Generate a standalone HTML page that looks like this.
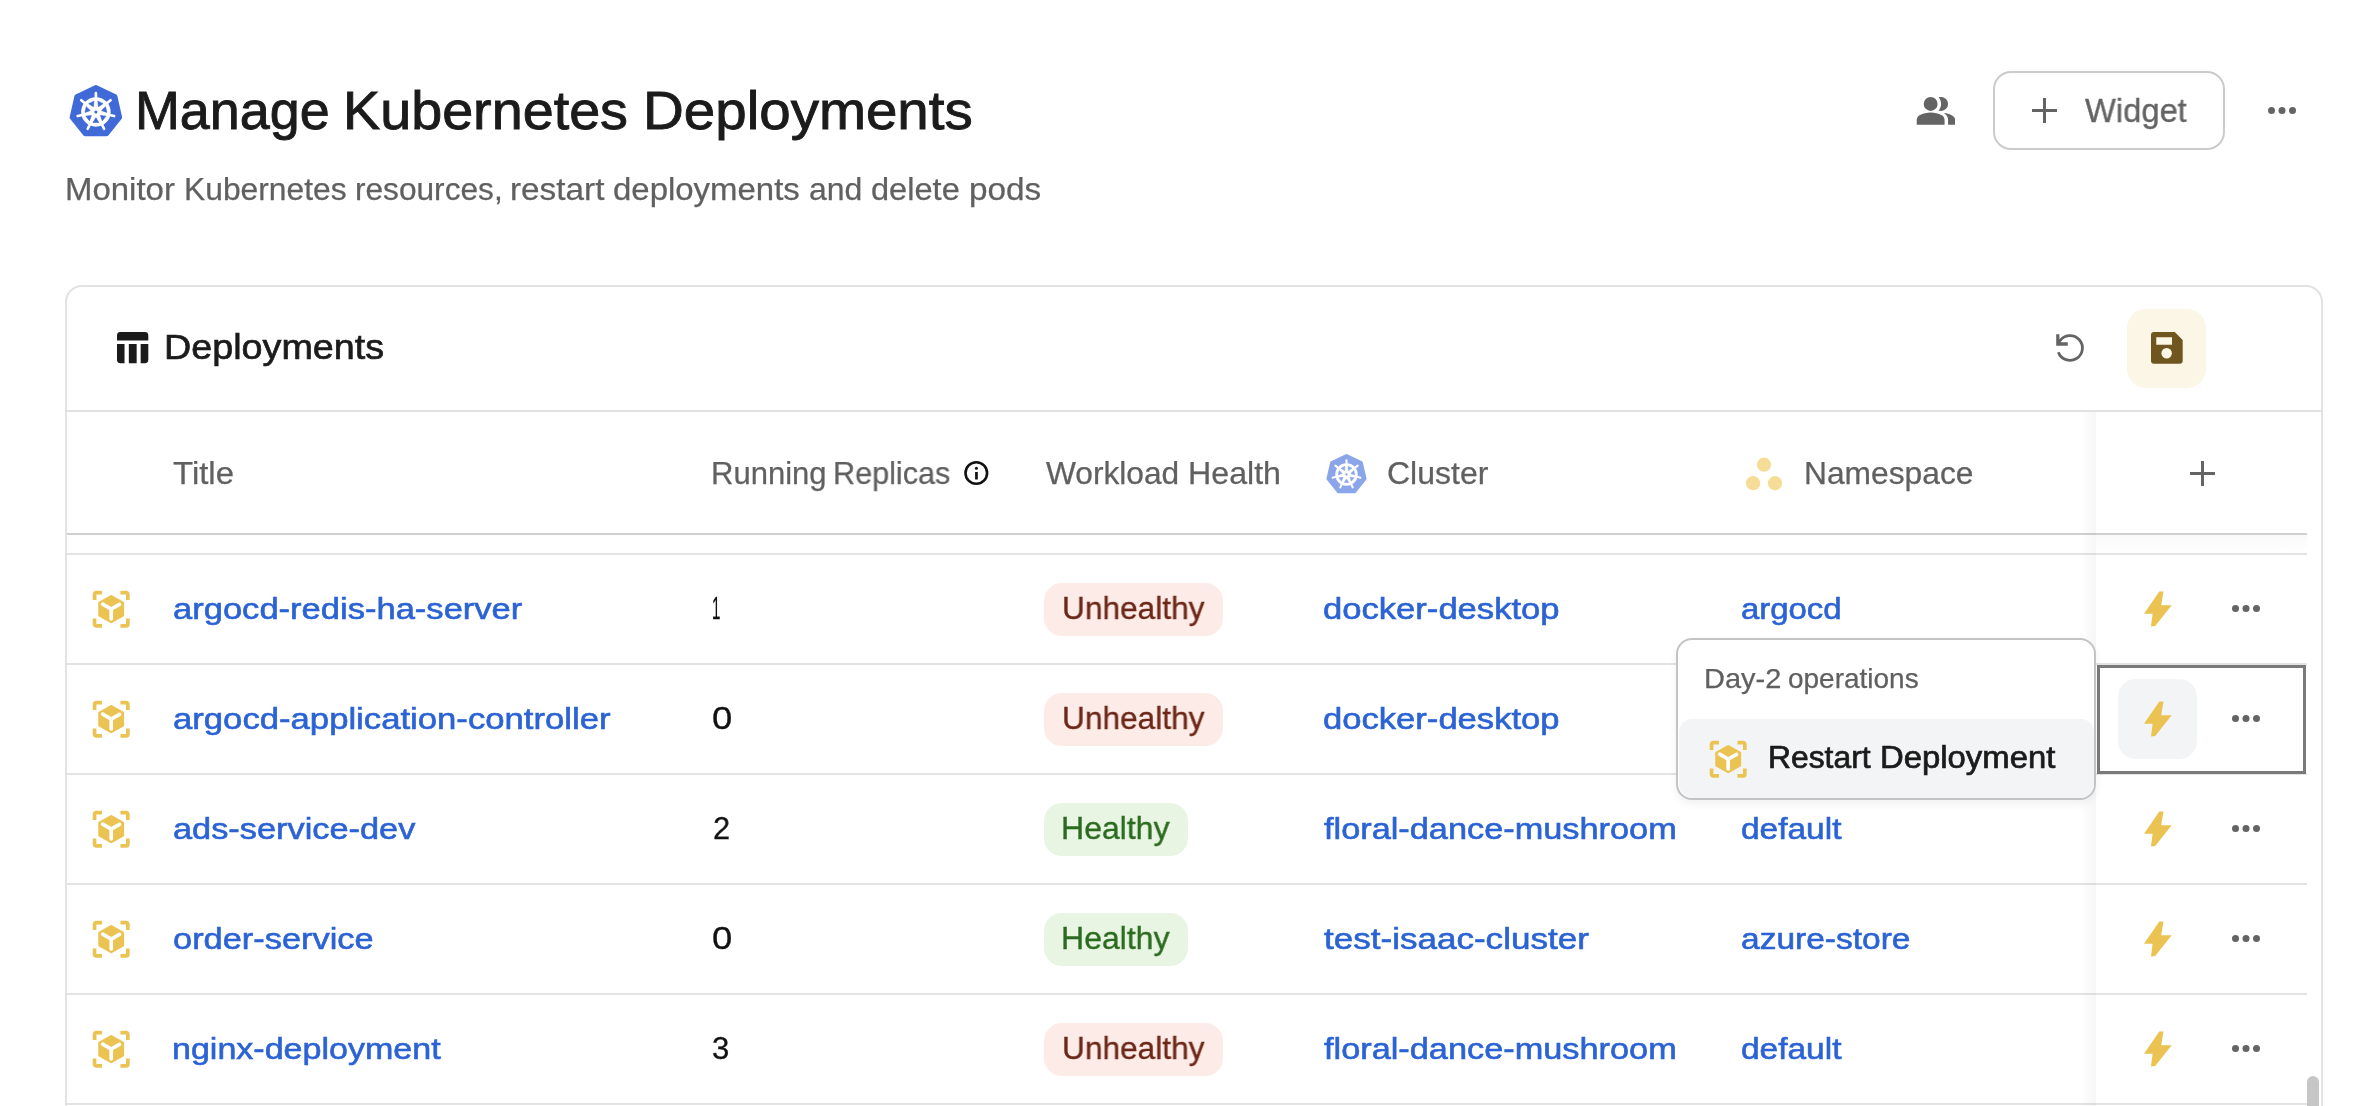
<!DOCTYPE html>
<html><head><meta charset="utf-8">
<style>
html,body{margin:0;padding:0}
html{width:2354px;height:1106px;overflow:hidden;background:#fff}
body{width:2354px;height:1106px;overflow:hidden;background:#fff;font-family:"Liberation Sans",sans-serif;position:relative}
.a{position:absolute}
.t{position:absolute;white-space:nowrap;line-height:1;transform-origin:0 0;will-change:transform}
.badge{position:absolute;height:53px;border-radius:18px}
.hl{position:absolute;left:67px;width:2240px;height:2px;background:#e3e3e3}
</style></head>
<body><div style="position:absolute;left:0;top:0;width:2354px;height:1106px;overflow:hidden">
<svg class="a" style="left:68.70px;top:84.90px" width="53.80" height="53.80" viewBox="0 0 100 100">
  <polygon points="50.00,4.00 85.96,21.32 94.85,60.24 69.96,91.44 30.04,91.44 5.15,60.24 14.04,21.32" fill="#3f6ad8" stroke="#3f6ad8" stroke-width="8" stroke-linejoin="round"/>
  <circle cx="50" cy="50" r="27.4" fill="#fff"/>
  <path d="M50.00 24.00L50.00 15.20M70.33 33.79L77.21 28.30M75.35 55.79L83.93 57.74M61.28 73.43L65.10 81.35M38.72 73.43L34.90 81.35M24.65 55.79L16.07 57.74M29.67 33.79L22.79 28.30" stroke="#fff" stroke-width="5" stroke-linecap="round"/>
  <path fill="#3f6ad8" stroke="#3f6ad8" stroke-width="1.2" stroke-linejoin="round" d="M53.60 30.02L63.38 34.73L54.69 40.27ZM67.86 40.36L70.28 50.94L60.53 47.60ZM68.68 57.96L61.91 66.44L58.44 56.73ZM55.42 69.56L44.58 69.56L50.00 60.80ZM38.09 66.44L31.32 57.96L41.56 56.73ZM29.72 50.94L32.14 40.36L39.47 47.60ZM36.62 34.73L46.40 30.02L45.31 40.27Z"/>
  <circle cx="50" cy="50" r="2.8" fill="#3f6ad8"/>
</svg>
<svg class="a" style="left:1915.3px;top:89.7px" width="41.76" height="41.76" viewBox="0 0 24 24"><path fill="#646464" d="M1 20v-2.8q0-.85.438-1.563.437-.712 1.162-1.087 1.55-.775 3.15-1.163Q7.35 13 9 13t3.25.387q1.6.388 3.15 1.163.725.375 1.162 1.087Q17 16.35 17 17.2V20Zm18 0v-3q0-1.1-.612-2.113-.613-1.012-1.738-1.737 1.275.15 2.4.512 1.125.363 2.1.888.9.5 1.375 1.112Q23 16.275 23 17v3ZM9 12q-1.65 0-2.825-1.175Q5 9.65 5 8q0-1.65 1.175-2.825Q7.35 4 9 4q1.65 0 2.825 1.175Q13 6.350 13 8q0 1.65-1.175 2.825Q10.65 12 9 12Zm10-4q0 1.65-1.175 2.825Q16.65 12 15 12q-.275 0-.7-.062-.425-.063-.7-.138.675-.8 1.037-1.775Q15 9.05 15 8q0-1.05-.363-2.025Q14.275 5 13.6 4.2q.35-.125.7-.163Q14.65 4 15 4q1.65 0 2.825 1.175Q19 6.35 19 8Z"/></svg>
<div class="a" style="left:1993px;top:71px;width:227.5px;height:74.5px;border:2px solid #cbcbcb;border-radius:18px"></div>
<div class="a" style="left:2031.60px;top:109.40px;width:25px;height:3px;background:#636363"></div><div class="a" style="left:2042.60px;top:98.40px;width:3px;height:25px;background:#636363"></div>
<svg class="a" style="left:2267.00px;top:106.30px" width="30.00" height="9.00" fill="#646464"><circle cx="4.50" cy="4.50" r="3.50"/><circle cx="15.00" cy="4.50" r="3.50"/><circle cx="25.50" cy="4.50" r="3.50"/></svg>
<div class="a" style="left:65px;top:285px;width:2254px;height:840px;border:2px solid #e2e2e2;border-radius:17px"></div>
<div class="a" style="left:67px;top:410px;width:2254px;height:2px;background:#e2e2e2"></div>
<svg class="a" style="left:117.3px;top:332.3px" width="31.3" height="31.3" viewBox="0 0 32 32"><path fill="#1b1b1b" d="M3.5 0H28.5A3.5 3.5 0 0 1 32 3.5V8.6H0V3.5A3.5 3.5 0 0 1 3.5 0Z M0 12.3H7.7V32H3.5A3.5 3.5 0 0 1 0 28.5Z M12.1 12.3H20.1V32H12.1Z M24.2 12.3H32V28.5A3.5 3.5 0 0 1 28.5 32H24.2Z"/></svg>
<svg class="a" style="left:2050px;top:328px" width="40" height="40" viewBox="0 0 40 40">
  <path d="M8.35 24.2 A12.4 12.4 0 1 0 9.84 12.89" fill="none" stroke="#646464" stroke-width="2.8"/>
  <path d="M6.2 6.2V17.7H17.8V14.3H11.2L9.4 10.4V6.2Z" fill="#646464"/>
</svg>
<div class="a" style="left:2127px;top:309px;width:79px;height:79px;border-radius:19px;background:#fcf6e7"></div>
<svg class="a" style="left:2151.2px;top:331.9px" width="31.7" height="31.9" viewBox="0 0 32 32">
  <path fill="#6e561e" d="M3 0H24L32 8V29A3 3 0 0 1 29 32H3A3 3 0 0 1 0 29V3A3 3 0 0 1 3 0Z M5.3 5.3V12.8H21.2V5.3Z"/>
  <circle cx="15.8" cy="21.4" r="5.3" fill="#fcf6e7"/>
</svg>
<svg class="a" style="left:962px;top:459px" width="28" height="28" viewBox="0 0 28 28">
  <circle cx="14.3" cy="14" r="10.8" fill="none" stroke="#111" stroke-width="2.6"/>
  <circle cx="14.4" cy="9.3" r="1.5" fill="#111"/>
  <rect x="13.1" y="13" width="2.7" height="7.5" fill="#111"/>
</svg>
<svg class="a" style="left:1325.50px;top:453.50px" width="41.00" height="41.00" viewBox="0 0 100 100">
  <polygon points="50.00,4.00 85.96,21.32 94.85,60.24 69.96,91.44 30.04,91.44 5.15,60.24 14.04,21.32" fill="#8aa5e9" stroke="#8aa5e9" stroke-width="8" stroke-linejoin="round"/>
  <circle cx="50" cy="50" r="27.4" fill="#fff"/>
  <path d="M50.00 24.00L50.00 15.20M70.33 33.79L77.21 28.30M75.35 55.79L83.93 57.74M61.28 73.43L65.10 81.35M38.72 73.43L34.90 81.35M24.65 55.79L16.07 57.74M29.67 33.79L22.79 28.30" stroke="#fff" stroke-width="5" stroke-linecap="round"/>
  <path fill="#8aa5e9" stroke="#8aa5e9" stroke-width="1.2" stroke-linejoin="round" d="M53.60 30.02L63.38 34.73L54.69 40.27ZM67.86 40.36L70.28 50.94L60.53 47.60ZM68.68 57.96L61.91 66.44L58.44 56.73ZM55.42 69.56L44.58 69.56L50.00 60.80ZM38.09 66.44L31.32 57.96L41.56 56.73ZM29.72 50.94L32.14 40.36L39.47 47.60ZM36.62 34.73L46.40 30.02L45.31 40.27Z"/>
  <circle cx="50" cy="50" r="2.8" fill="#8aa5e9"/>
</svg>
<svg class="a" style="left:1740px;top:452px" width="48" height="40" viewBox="0 0 48 40">
  <circle cx="24" cy="12.7" r="7.1" fill="#f5dc97"/>
  <circle cx="13.1" cy="31.2" r="7.1" fill="#f5dc97"/>
  <circle cx="35" cy="31.2" r="7.1" fill="#f5dc97"/>
</svg>
<div class="a" style="left:2189.50px;top:471.50px;width:25px;height:3px;background:#646464"></div><div class="a" style="left:2200.50px;top:460.50px;width:3px;height:25px;background:#646464"></div>
<div class="a" style="left:67px;top:533px;width:2240px;height:2px;background:#d0d0d0"></div>
<div class="hl" style="top:553px"></div>
<svg class="a" style="left:89.00px;top:587.00px" width="44.4" height="44.4" viewBox="0 0 24 24"><path fill="none" stroke="#ebc352" stroke-width="2" d="M3 7V3.9A0.9 0.9 0 0 1 3.9 3H7M17 3H20.1A0.9 0.9 0 0 1 21 3.9V7M21 17V20.1A0.9 0.9 0 0 1 20.1 21H17M7 21H3.9A0.9 0.9 0 0 1 3 20.1V17"/><path fill="#ebc352" stroke="#ebc352" stroke-width="1.6" stroke-linejoin="round" d="M12 5.1L18.2 8.7V15.3L12 18.8L5.8 15.3V8.7Z"/><path fill="none" stroke="#fff" stroke-width="2" stroke-linecap="round" d="M7.4 9.3L12 11.9L16.5 9.4M12 11.9V17.2"/></svg>
<div class="badge" style="left:1044px;top:583px;width:179px;background:#fdebe7"></div>
<div class="hl" style="top:663px"></div>
<svg class="a" style="left:89.00px;top:697.00px" width="44.4" height="44.4" viewBox="0 0 24 24"><path fill="none" stroke="#ebc352" stroke-width="2" d="M3 7V3.9A0.9 0.9 0 0 1 3.9 3H7M17 3H20.1A0.9 0.9 0 0 1 21 3.9V7M21 17V20.1A0.9 0.9 0 0 1 20.1 21H17M7 21H3.9A0.9 0.9 0 0 1 3 20.1V17"/><path fill="#ebc352" stroke="#ebc352" stroke-width="1.6" stroke-linejoin="round" d="M12 5.1L18.2 8.7V15.3L12 18.8L5.8 15.3V8.7Z"/><path fill="none" stroke="#fff" stroke-width="2" stroke-linecap="round" d="M7.4 9.3L12 11.9L16.5 9.4M12 11.9V17.2"/></svg>
<div class="badge" style="left:1044px;top:693px;width:179px;background:#fdebe7"></div>
<div class="hl" style="top:773px"></div>
<svg class="a" style="left:89.00px;top:807.00px" width="44.4" height="44.4" viewBox="0 0 24 24"><path fill="none" stroke="#ebc352" stroke-width="2" d="M3 7V3.9A0.9 0.9 0 0 1 3.9 3H7M17 3H20.1A0.9 0.9 0 0 1 21 3.9V7M21 17V20.1A0.9 0.9 0 0 1 20.1 21H17M7 21H3.9A0.9 0.9 0 0 1 3 20.1V17"/><path fill="#ebc352" stroke="#ebc352" stroke-width="1.6" stroke-linejoin="round" d="M12 5.1L18.2 8.7V15.3L12 18.8L5.8 15.3V8.7Z"/><path fill="none" stroke="#fff" stroke-width="2" stroke-linecap="round" d="M7.4 9.3L12 11.9L16.5 9.4M12 11.9V17.2"/></svg>
<div class="badge" style="left:1044px;top:803px;width:144px;background:#e8f5e3"></div>
<div class="hl" style="top:883px"></div>
<svg class="a" style="left:89.00px;top:917.00px" width="44.4" height="44.4" viewBox="0 0 24 24"><path fill="none" stroke="#ebc352" stroke-width="2" d="M3 7V3.9A0.9 0.9 0 0 1 3.9 3H7M17 3H20.1A0.9 0.9 0 0 1 21 3.9V7M21 17V20.1A0.9 0.9 0 0 1 20.1 21H17M7 21H3.9A0.9 0.9 0 0 1 3 20.1V17"/><path fill="#ebc352" stroke="#ebc352" stroke-width="1.6" stroke-linejoin="round" d="M12 5.1L18.2 8.7V15.3L12 18.8L5.8 15.3V8.7Z"/><path fill="none" stroke="#fff" stroke-width="2" stroke-linecap="round" d="M7.4 9.3L12 11.9L16.5 9.4M12 11.9V17.2"/></svg>
<div class="badge" style="left:1044px;top:913px;width:144px;background:#e8f5e3"></div>
<div class="hl" style="top:993px"></div>
<svg class="a" style="left:89.00px;top:1027.00px" width="44.4" height="44.4" viewBox="0 0 24 24"><path fill="none" stroke="#ebc352" stroke-width="2" d="M3 7V3.9A0.9 0.9 0 0 1 3.9 3H7M17 3H20.1A0.9 0.9 0 0 1 21 3.9V7M21 17V20.1A0.9 0.9 0 0 1 20.1 21H17M7 21H3.9A0.9 0.9 0 0 1 3 20.1V17"/><path fill="#ebc352" stroke="#ebc352" stroke-width="1.6" stroke-linejoin="round" d="M12 5.1L18.2 8.7V15.3L12 18.8L5.8 15.3V8.7Z"/><path fill="none" stroke="#fff" stroke-width="2" stroke-linecap="round" d="M7.4 9.3L12 11.9L16.5 9.4M12 11.9V17.2"/></svg>
<div class="badge" style="left:1044px;top:1023px;width:179px;background:#fdebe7"></div>
<div class="hl" style="top:1103px"></div>
<div class="a" style="left:2080px;top:412px;width:16px;height:694px;background:linear-gradient(to right,rgba(0,0,0,0),rgba(0,0,0,0.035))"></div>
<div class="a" style="left:2096px;top:535px;width:211px;height:18px;background:linear-gradient(to bottom,rgba(0,0,0,0.025),rgba(0,0,0,0))"></div>
<div class="a" style="left:2117.8px;top:679.4px;width:78.8px;height:79.6px;border-radius:18px;background:#f3f4f6"></div>
<div class="a" style="left:2097px;top:665px;width:202.6px;height:102.6px;border:3.7px solid #7a7a7a"></div>
<svg class="a" style="left:2140px;top:587px" width="36" height="40" viewBox="2140 587 36 40"><polygon fill="#ebc352" points="2159.3,591.5 2163.5,591.5 2161.2,605.2 2171.7,605.2 2155.2,626 2151,626.5 2152.6,613.8 2144,613.8"/></svg>
<svg class="a" style="left:2231.00px;top:604.10px" width="30.00" height="9.00" fill="#646464"><circle cx="4.50" cy="4.50" r="3.50"/><circle cx="15.00" cy="4.50" r="3.50"/><circle cx="25.50" cy="4.50" r="3.50"/></svg>
<svg class="a" style="left:2140px;top:697px" width="36" height="40" viewBox="2140 587 36 40"><polygon fill="#ebc352" points="2159.3,591.5 2163.5,591.5 2161.2,605.2 2171.7,605.2 2155.2,626 2151,626.5 2152.6,613.8 2144,613.8"/></svg>
<svg class="a" style="left:2231.00px;top:714.10px" width="30.00" height="9.00" fill="#646464"><circle cx="4.50" cy="4.50" r="3.50"/><circle cx="15.00" cy="4.50" r="3.50"/><circle cx="25.50" cy="4.50" r="3.50"/></svg>
<svg class="a" style="left:2140px;top:807px" width="36" height="40" viewBox="2140 587 36 40"><polygon fill="#ebc352" points="2159.3,591.5 2163.5,591.5 2161.2,605.2 2171.7,605.2 2155.2,626 2151,626.5 2152.6,613.8 2144,613.8"/></svg>
<svg class="a" style="left:2231.00px;top:824.10px" width="30.00" height="9.00" fill="#646464"><circle cx="4.50" cy="4.50" r="3.50"/><circle cx="15.00" cy="4.50" r="3.50"/><circle cx="25.50" cy="4.50" r="3.50"/></svg>
<svg class="a" style="left:2140px;top:917px" width="36" height="40" viewBox="2140 587 36 40"><polygon fill="#ebc352" points="2159.3,591.5 2163.5,591.5 2161.2,605.2 2171.7,605.2 2155.2,626 2151,626.5 2152.6,613.8 2144,613.8"/></svg>
<svg class="a" style="left:2231.00px;top:934.10px" width="30.00" height="9.00" fill="#646464"><circle cx="4.50" cy="4.50" r="3.50"/><circle cx="15.00" cy="4.50" r="3.50"/><circle cx="25.50" cy="4.50" r="3.50"/></svg>
<svg class="a" style="left:2140px;top:1027px" width="36" height="40" viewBox="2140 587 36 40"><polygon fill="#ebc352" points="2159.3,591.5 2163.5,591.5 2161.2,605.2 2171.7,605.2 2155.2,626 2151,626.5 2152.6,613.8 2144,613.8"/></svg>
<svg class="a" style="left:2231.00px;top:1044.10px" width="30.00" height="9.00" fill="#646464"><circle cx="4.50" cy="4.50" r="3.50"/><circle cx="15.00" cy="4.50" r="3.50"/><circle cx="25.50" cy="4.50" r="3.50"/></svg>
<div class="a" style="left:2307px;top:1075.8px;width:12.4px;height:40px;border-radius:6.2px;background:#c6c6c6"></div>
<div class="t" style="left:135.25px;top:83.80px;font-size:53.34px;color:#1b1b1b;-webkit-text-stroke:0.90px #1b1b1b;transform:scaleX(1.0099)">Manage</div>
<div class="t" style="left:343.32px;top:83.80px;font-size:53.34px;color:#1b1b1b;-webkit-text-stroke:0.90px #1b1b1b;transform:scaleX(1.0448)">Kubernetes</div>
<div class="t" style="left:642.66px;top:83.80px;font-size:53.34px;color:#1b1b1b;-webkit-text-stroke:0.90px #1b1b1b;transform:scaleX(1.0595)">Deployments</div>
<div class="t" style="left:65.06px;top:173.88px;font-size:31.18px;color:#606060;-webkit-text-stroke:0.25px #606060;transform:scaleX(1.0569)">Monitor</div>
<div class="t" style="left:183.54px;top:173.88px;font-size:31.18px;color:#606060;-webkit-text-stroke:0.25px #606060;transform:scaleX(1.0198)">Kubernetes</div>
<div class="t" style="left:355.05px;top:173.88px;font-size:31.18px;color:#606060;-webkit-text-stroke:0.25px #606060;transform:scaleX(1.0147)">resources,</div>
<div class="t" style="left:509.55px;top:173.88px;font-size:31.18px;color:#606060;-webkit-text-stroke:0.25px #606060;transform:scaleX(1.0684)">restart</div>
<div class="t" style="left:613.20px;top:173.88px;font-size:31.18px;color:#606060;-webkit-text-stroke:0.25px #606060;transform:scaleX(1.0567)">deployments</div>
<div class="t" style="left:809.03px;top:173.88px;font-size:31.18px;color:#606060;-webkit-text-stroke:0.25px #606060;transform:scaleX(1.0254)">and</div>
<div class="t" style="left:871.41px;top:173.88px;font-size:31.18px;color:#606060;-webkit-text-stroke:0.25px #606060;transform:scaleX(1.0451)">delete</div>
<div class="t" style="left:968.65px;top:173.88px;font-size:31.18px;color:#606060;-webkit-text-stroke:0.25px #606060;transform:scaleX(1.0688)">pods</div>
<div class="t" style="left:2084.57px;top:93.81px;font-size:33.21px;color:#636363;-webkit-text-stroke:0.35px #636363;transform:scaleX(0.9853)">Widget</div>
<div class="t" style="left:163.62px;top:330.01px;font-size:35.61px;color:#1b1b1b;-webkit-text-stroke:0.70px #1b1b1b;transform:scaleX(1.0590)">Deployments</div>
<div class="t" style="left:172.82px;top:458.01px;font-size:31.03px;color:#606060;-webkit-text-stroke:0.25px #606060;transform:scaleX(1.0611)">Title</div>
<div class="t" style="left:710.70px;top:458.01px;font-size:31.03px;color:#606060;-webkit-text-stroke:0.25px #606060">Running</div>
<div class="t" style="left:833.03px;top:458.01px;font-size:31.03px;color:#606060;-webkit-text-stroke:0.25px #606060;transform:scaleX(0.9857)">Replicas</div>
<div class="t" style="left:1046.13px;top:458.01px;font-size:31.03px;color:#606060;-webkit-text-stroke:0.25px #606060;transform:scaleX(1.0208)">Workload</div>
<div class="t" style="left:1187.61px;top:458.01px;font-size:31.03px;color:#606060;-webkit-text-stroke:0.25px #606060;transform:scaleX(1.0375)">Health</div>
<div class="t" style="left:1387.43px;top:458.01px;font-size:31.03px;color:#606060;-webkit-text-stroke:0.25px #606060;transform:scaleX(1.0316)">Cluster</div>
<div class="t" style="left:1804.45px;top:458.21px;font-size:31.03px;color:#606060;-webkit-text-stroke:0.25px #606060;transform:scaleX(1.0237)">Namespace</div>
<div class="t" style="left:173.26px;top:593.53px;font-size:30.21px;color:#2b63d4;-webkit-text-stroke:0.60px #2b63d4;transform:scaleX(1.1434)">argocd-redis-ha-server</div>
<div class="t" style="left:711.94px;top:592.92px;font-size:31.10px;color:#111;-webkit-text-stroke:0.30px #111;transform:scaleX(0.4794)">1</div>
<div class="t" style="left:1061.69px;top:592.30px;font-size:32.05px;color:#6b2717;-webkit-text-stroke:0.35px #6b2717;transform:scaleX(0.9876)">Unhealthy</div>
<div class="t" style="left:1323.26px;top:593.53px;font-size:30.21px;color:#2b63d4;-webkit-text-stroke:0.60px #2b63d4;transform:scaleX(1.1456)">docker-desktop</div>
<div class="t" style="left:1741.30px;top:593.53px;font-size:30.21px;color:#2b63d4;-webkit-text-stroke:0.60px #2b63d4;transform:scaleX(1.0894)">argocd</div>
<div class="t" style="left:173.26px;top:703.53px;font-size:30.21px;color:#2b63d4;-webkit-text-stroke:0.60px #2b63d4;transform:scaleX(1.1480)">argocd-application-controller</div>
<div class="t" style="left:712.24px;top:702.92px;font-size:31.10px;color:#111;-webkit-text-stroke:0.30px #111;transform:scaleX(1.1733)">0</div>
<div class="t" style="left:1061.69px;top:702.30px;font-size:32.05px;color:#6b2717;-webkit-text-stroke:0.35px #6b2717;transform:scaleX(0.9876)">Unhealthy</div>
<div class="t" style="left:1323.26px;top:703.53px;font-size:30.21px;color:#2b63d4;-webkit-text-stroke:0.60px #2b63d4;transform:scaleX(1.1456)">docker-desktop</div>
<div class="t" style="left:173.27px;top:813.53px;font-size:30.21px;color:#2b63d4;-webkit-text-stroke:0.60px #2b63d4;transform:scaleX(1.1369)">ads-service-dev</div>
<div class="t" style="left:712.61px;top:812.92px;font-size:31.10px;color:#111;-webkit-text-stroke:0.30px #111;transform:scaleX(0.9879)">2</div>
<div class="t" style="left:1061.38px;top:812.30px;font-size:32.05px;color:#2b6a1f;-webkit-text-stroke:0.35px #2b6a1f;transform:scaleX(0.9980)">Healthy</div>
<div class="t" style="left:1324.34px;top:813.53px;font-size:30.21px;color:#2b63d4;-webkit-text-stroke:0.60px #2b63d4;transform:scaleX(1.1359)">floral-dance-mushroom</div>
<div class="t" style="left:1741.29px;top:813.53px;font-size:30.21px;color:#2b63d4;-webkit-text-stroke:0.60px #2b63d4;transform:scaleX(1.1077)">default</div>
<div class="t" style="left:173.27px;top:923.53px;font-size:30.21px;color:#2b63d4;-webkit-text-stroke:0.60px #2b63d4;transform:scaleX(1.1386)">order-service</div>
<div class="t" style="left:712.24px;top:922.92px;font-size:31.10px;color:#111;-webkit-text-stroke:0.30px #111;transform:scaleX(1.1733)">0</div>
<div class="t" style="left:1061.38px;top:922.30px;font-size:32.05px;color:#2b6a1f;-webkit-text-stroke:0.35px #2b6a1f;transform:scaleX(0.9980)">Healthy</div>
<div class="t" style="left:1324.35px;top:923.53px;font-size:30.21px;color:#2b63d4;-webkit-text-stroke:0.60px #2b63d4;transform:scaleX(1.1602)">test-isaac-cluster</div>
<div class="t" style="left:1741.29px;top:923.53px;font-size:30.21px;color:#2b63d4;-webkit-text-stroke:0.60px #2b63d4;transform:scaleX(1.1097)">azure-store</div>
<div class="t" style="left:172.21px;top:1033.53px;font-size:30.21px;color:#2b63d4;-webkit-text-stroke:0.60px #2b63d4;transform:scaleX(1.1266)">nginx-deployment</div>
<div class="t" style="left:712.38px;top:1032.92px;font-size:31.10px;color:#111;-webkit-text-stroke:0.30px #111;transform:scaleX(1.0022)">3</div>
<div class="t" style="left:1061.69px;top:1032.30px;font-size:32.05px;color:#6b2717;-webkit-text-stroke:0.35px #6b2717;transform:scaleX(0.9876)">Unhealthy</div>
<div class="t" style="left:1324.34px;top:1033.53px;font-size:30.21px;color:#2b63d4;-webkit-text-stroke:0.60px #2b63d4;transform:scaleX(1.1359)">floral-dance-mushroom</div>
<div class="t" style="left:1741.29px;top:1033.53px;font-size:30.21px;color:#2b63d4;-webkit-text-stroke:0.60px #2b63d4;transform:scaleX(1.1077)">default</div>
<div class="a" style="left:1676px;top:638px;width:416.3px;height:158.2px;border:2px solid #c3c3c3;border-radius:16px;background:#fff;box-shadow:0 4px 8px rgba(0,0,0,0.06)"></div>
<div class="a" style="left:1679px;top:719px;width:415.3px;height:79.2px;border-radius:13px 13px 14px 14px;background:#f3f4f6"></div>
<svg class="a" style="left:1706.30px;top:737.00px" width="44.4" height="44.4" viewBox="0 0 24 24"><path fill="none" stroke="#ebc352" stroke-width="2" d="M3 7V3.9A0.9 0.9 0 0 1 3.9 3H7M17 3H20.1A0.9 0.9 0 0 1 21 3.9V7M21 17V20.1A0.9 0.9 0 0 1 20.1 21H17M7 21H3.9A0.9 0.9 0 0 1 3 20.1V17"/><path fill="#ebc352" stroke="#ebc352" stroke-width="1.6" stroke-linejoin="round" d="M12 5.1L18.2 8.7V15.3L12 18.8L5.8 15.3V8.7Z"/><path fill="none" stroke="#fff" stroke-width="2" stroke-linecap="round" d="M7.4 9.3L12 11.9L16.5 9.4M12 11.9V17.2"/></svg>
<div class="t" style="left:1703.57px;top:665.65px;font-size:26.96px;color:#606060;-webkit-text-stroke:0.25px #606060;transform:scaleX(1.0743)">Day-2</div>
<div class="t" style="left:1788.26px;top:665.65px;font-size:26.96px;color:#606060;-webkit-text-stroke:0.25px #606060;transform:scaleX(1.0379)">operations</div>
<div class="t" style="left:1767.87px;top:743.17px;font-size:30.81px;color:#1b1b1b;-webkit-text-stroke:0.70px #1b1b1b;transform:scaleX(1.0336)">Restart</div>
<div class="t" style="left:1880.41px;top:743.17px;font-size:30.81px;color:#1b1b1b;-webkit-text-stroke:0.70px #1b1b1b;transform:scaleX(1.0668)">Deployment</div>
</div></body></html>
